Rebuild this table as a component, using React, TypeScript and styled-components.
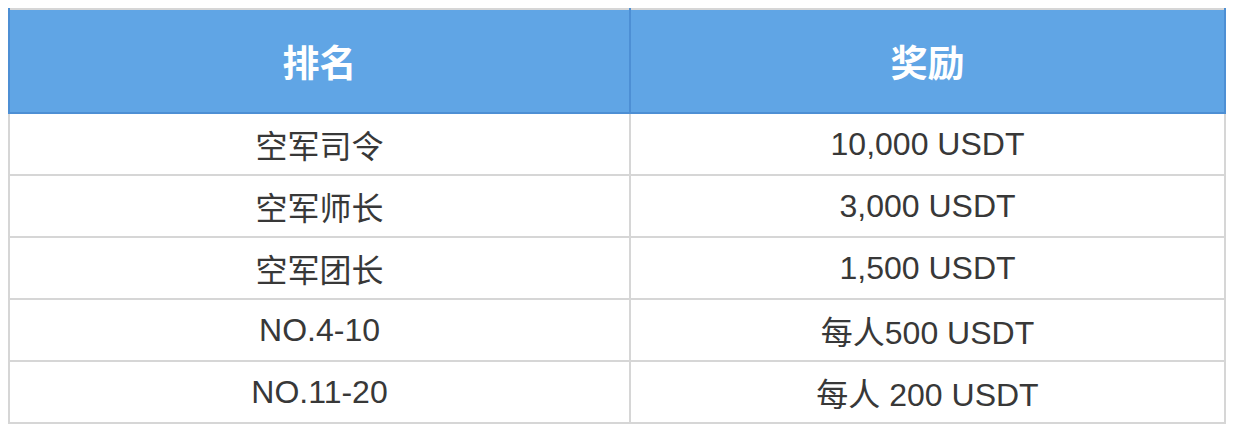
import React from "react";
import styled, { createGlobalStyle } from "styled-components";

const GlobalStyle = createGlobalStyle`
  body {
    margin: 8px;
    background: #ffffff;
    font-family: "Liberation Sans", "Noto Sans CJK SC", sans-serif;
  }
`;

const rewards = [
  { rank: "空军司令", prize: "10,000 USDT" },
  { rank: "空军师长", prize: "3,000 USDT" },
  { rank: "空军团长", prize: "1,500 USDT" },
  { rank: "NO.4-10", prize: "每人500 USDT" },
  { rank: "NO.11-20", prize: "每人 200 USDT" }
];

const RewardTable = styled.table`
  width: 1218px;
  border-collapse: collapse;
  table-layout: fixed;
  border: 2px solid #d6d6d6;
  color: #383838;
`;

const HeadCell = styled.th`
  height: 102px;
  padding: 0;
  background: #60a5e5;
  color: #ffffff;
  font-size: 37px;
  font-weight: bold;
  text-align: center;
  border-left: 2px solid #4d8fd4;
  border-right: 2px solid #4d8fd4;
  border-bottom: 2px solid #4d8fd4;
`;

const Cell = styled.td`
  height: 60px;
  padding: 0;
  font-size: 32px;
  text-align: center;
  border: 2px solid #d6d6d6;
`;

export default function App(): JSX.Element {
  return (
    <>
      <GlobalStyle />
      <RewardTable>
        <colgroup>
          <col style={{ width: "621px" }} />
          <col />
        </colgroup>
        <thead>
          <tr>
            <HeadCell>排名</HeadCell>
            <HeadCell>奖励</HeadCell>
          </tr>
        </thead>
        <tbody>
          {rewards.map((r) => (
            <tr key={r.rank}>
              <Cell>{r.rank}</Cell>
              <Cell>{r.prize}</Cell>
            </tr>
          ))}
        </tbody>
      </RewardTable>
    </>
  );
}
